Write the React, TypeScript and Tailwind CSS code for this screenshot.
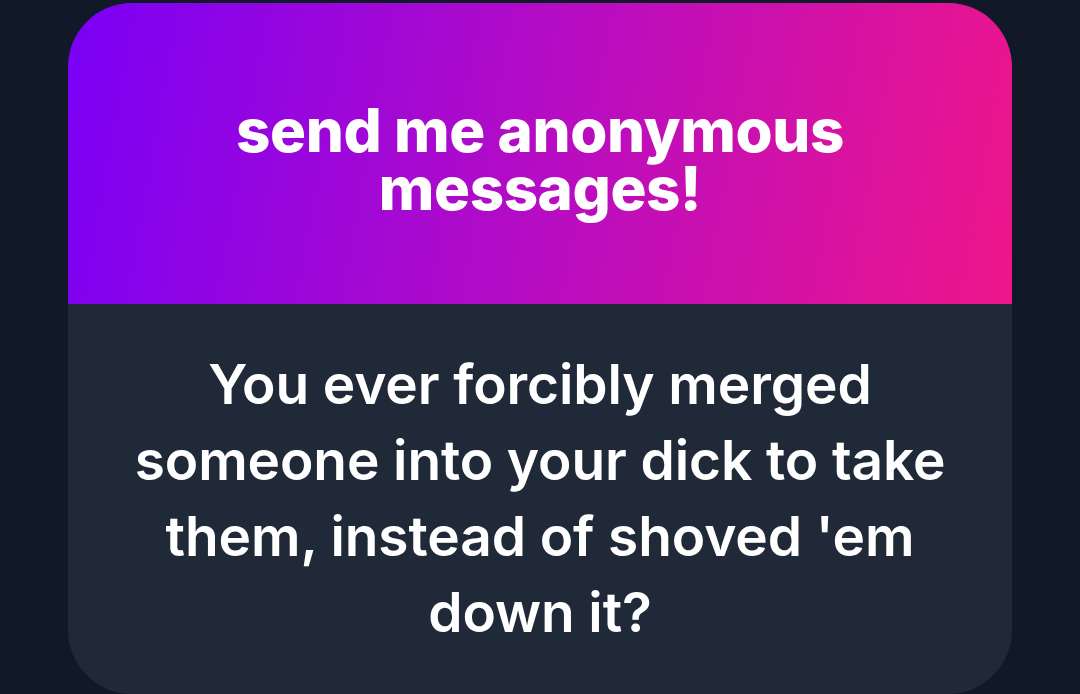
export default function App() {
  return (
    <div className="min-h-screen w-full bg-[#111827] overflow-hidden">
      <div className="mx-auto pt-[3px] w-[944px]" style={{ fontFamily: 'Inter, "Noto Sans", sans-serif' }}>
        <div className="rounded-[64px] overflow-hidden bg-[#1f2937] h-[691px] flex flex-col">
          <div className="h-[301px] shrink-0 flex items-center justify-center bg-[linear-gradient(100deg,#7a00f6_0%,#b50cc4_50%,#ee168a_100%)] px-10">
            <h1 className="text-white text-center font-extrabold text-[60px] leading-[58px] tracking-[-0.4px] pt-[10px]">
              send me anonymous
              <br />
              messages!
            </h1>
          </div>
          <div className="flex-1 flex justify-center pt-[42px]">
            <p className="max-w-[860px] text-white text-center font-semibold text-[55px] leading-[76px] tracking-[-0.1px]">
              You ever forcibly merged someone into your dick to take them, instead of shoved 'em down it?
            </p>
          </div>
        </div>
      </div>
    </div>
  )
}
